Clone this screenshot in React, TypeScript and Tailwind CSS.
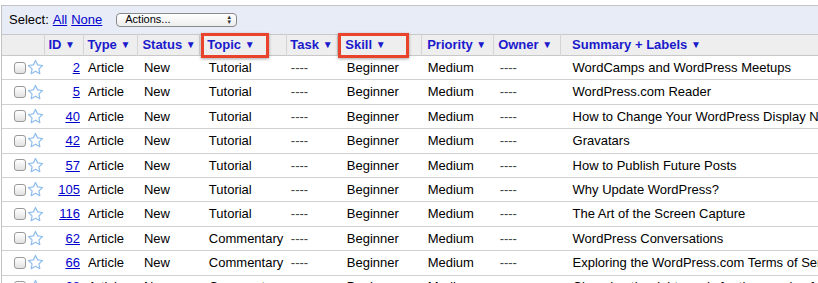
import React from "react"

interface Row {
  id: number
  type: string
  status: string
  topic: string
  task: string
  skill: string
  priority: string
  owner: string
  summary: string
}

const rows: Row[] = [
  { id: 2, type: "Article", status: "New", topic: "Tutorial", task: "----", skill: "Beginner", priority: "Medium", owner: "----", summary: "WordCamps and WordPress Meetups" },
  { id: 5, type: "Article", status: "New", topic: "Tutorial", task: "----", skill: "Beginner", priority: "Medium", owner: "----", summary: "WordPress.com Reader" },
  { id: 40, type: "Article", status: "New", topic: "Tutorial", task: "----", skill: "Beginner", priority: "Medium", owner: "----", summary: "How to Change Your WordPress Display Name" },
  { id: 42, type: "Article", status: "New", topic: "Tutorial", task: "----", skill: "Beginner", priority: "Medium", owner: "----", summary: "Gravatars" },
  { id: 57, type: "Article", status: "New", topic: "Tutorial", task: "----", skill: "Beginner", priority: "Medium", owner: "----", summary: "How to Publish Future Posts" },
  { id: 105, type: "Article", status: "New", topic: "Tutorial", task: "----", skill: "Beginner", priority: "Medium", owner: "----", summary: "Why Update WordPress?" },
  { id: 116, type: "Article", status: "New", topic: "Tutorial", task: "----", skill: "Beginner", priority: "Medium", owner: "----", summary: "The Art of the Screen Capture" },
  { id: 62, type: "Article", status: "New", topic: "Commentary", task: "----", skill: "Beginner", priority: "Medium", owner: "----", summary: "WordPress Conversations" },
  { id: 66, type: "Article", status: "New", topic: "Commentary", task: "----", skill: "Beginner", priority: "Medium", owner: "----", summary: "Exploring the WordPress.com Terms of Service" },
  { id: 68, type: "Article", status: "New", topic: "Commentary", task: "----", skill: "Beginner", priority: "Medium", owner: "----", summary: "Choosing the right words for the people of the web" },
]

const headers = [
  { label: "ID", w: "w-[39px]", pl: "pl-[3px]" },
  { label: "Type", w: "w-[54px]", pl: "pl-[3px]" },
  { label: "Status", w: "w-[62px]", pl: "pl-[4px]" },
  { label: "Topic", w: "w-[87px]", pl: "pl-[7px]" },
  { label: "Task", w: "w-[51px]", pl: "pl-[3px]" },
  { label: "Skill", w: "w-[84px]", pl: "pl-[7px]" },
  { label: "Priority", w: "w-[72px]", pl: "pl-[5px]" },
  { label: "Owner", w: "w-[67px]", pl: "pl-[4px]" },
  { label: "Summary + Labels", w: "w-[340px]", pl: "pl-[11px]" },
]

function Star() {
  return (
    <svg width="17" height="17" viewBox="0 0 24 24" fill="white" stroke="#8fbcec" strokeWidth="1.7" strokeLinejoin="round">
      <path d="M12 2l3 6.3 6.9.9-5.1 4.8 1.3 6.8L12 17.4l-6.1 3.4 1.3-6.8-5.1-4.8 6.9-.9z" />
    </svg>
  )
}

function Checkbox() {
  return (
    <span className="inline-block w-[12px] h-[12px] rounded-[3px] border border-[#9a9a9a] bg-gradient-to-b from-white to-[#e2e2e2]" />
  )
}

export default function App() {
  return (
    <div className="relative w-[818px] h-[283px] overflow-hidden bg-white pt-[5px] pl-[1px] font-['Liberation_Sans',Arial,sans-serif] text-[13px] text-black">
      <div className="w-[900px] border-t border-l border-[#c3c3c3]">
        <div className="flex items-center h-[28px] bg-[#e8ecf7] pl-[7px] pb-[1px]">
          <span>Select:</span>
          <a className="ml-[4px] text-[#0000cc] underline">All</a>
          <a className="ml-[4px] text-[#0000cc] underline">None</a>
          <div className="ml-[14px] flex items-center justify-between w-[121px] h-[14px] rounded-[4px] border border-[#8a8a8a] bg-gradient-to-b from-white to-[#ededed] pl-[8px] pr-[4px] text-[11px] leading-none">
            <span>Actions...</span>
            <span className="flex flex-col items-center text-[6px] leading-[5px] text-[#333]">
              <span>▲</span>
              <span>▼</span>
            </span>
          </div>
        </div>

        <table className="table-fixed border-collapse">
          <thead>
            <tr className="h-[21px] bg-[#eeeeee] border-t border-b border-[#c8c8c8]">
              <th className="w-[43px] border-r border-[#d4d4d4]" />
              {headers.map((h) => (
                <th
                  key={h.label}
                  className={`${h.w} ${h.pl} border-r border-[#d4d4d4] text-left font-bold text-[#1a1acc] whitespace-nowrap`}
                >
                  {h.label} <span className="text-[10px] align-[1px]">▼</span>
                </th>
              ))}
            </tr>
          </thead>
          <tbody>
            {rows.map((r) => (
              <tr key={r.id} className="h-[24.4px] border-b border-[#d0d0d0]">
                <td className="pl-[12px]">
                  <div className="flex items-center gap-[1px]">
                    <Checkbox />
                    <Star />
                  </div>
                </td>
                <td className="pr-[4px] text-right">
                  <a className="text-[#0000cc] underline">{r.id}</a>
                </td>
                <td className="pl-[4px]">{r.type}</td>
                <td className="pl-[6px]">{r.status}</td>
                <td className="pl-[9px] whitespace-nowrap">{r.topic}</td>
                <td className="pl-[4px] text-[#444]">{r.task}</td>
                <td className="pl-[9px]">{r.skill}</td>
                <td className="pl-[6px]">{r.priority}</td>
                <td className="pl-[6px] text-[#444]">{r.owner}</td>
                <td className="pl-[12px] whitespace-nowrap">{r.summary}</td>
              </tr>
            ))}
          </tbody>
        </table>
      </div>

      {/* annotation boxes */}
      <div className="absolute left-[201px] top-[33px] w-[68px] h-[25px] border-[3px] border-[#e9432c] shadow-[0_1px_3px_rgba(0,0,0,0.35)]" />
      <div className="absolute left-[338px] top-[33px] w-[71px] h-[25px] border-[3px] border-[#e9432c] shadow-[0_1px_3px_rgba(0,0,0,0.35)]" />
    </div>
  )
}
